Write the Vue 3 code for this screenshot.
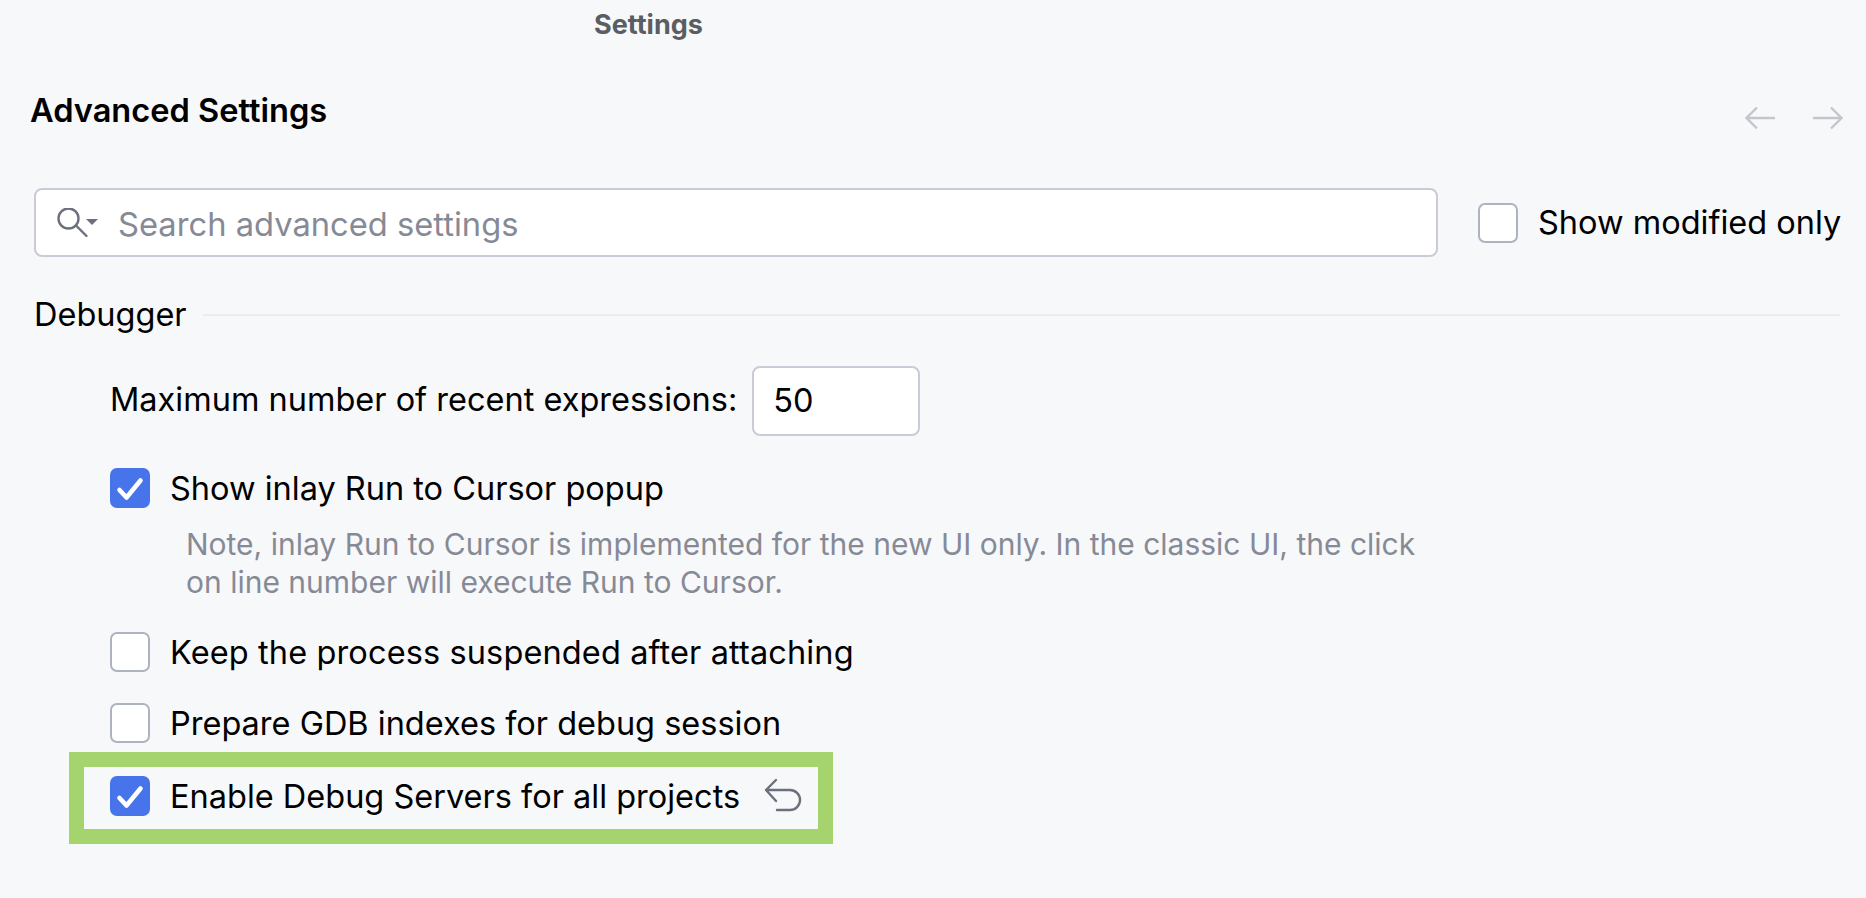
<template>
  <div class="settings-page">
    <div class="window-title">Settings</div>

    <!-- Header -->
    <div class="page-header">
      <div class="page-title">Advanced Settings</div>
      <div class="nav-arrows">
        <svg width="30" height="24" viewBox="0 0 30 24" fill="none" stroke="#c4c6cb" stroke-width="2.4">
          <path d="M30 12H2M12 1.5L1.5 12L12 22.5" />
        </svg>
        <svg width="30" height="24" viewBox="0 0 30 24" fill="none" stroke="#c4c6cb" stroke-width="2.4">
          <path d="M0 12H28M18 1.5L28.5 12L18 22.5" />
        </svg>
      </div>
    </div>

    <!-- Search -->
    <div class="search-row">
      <div class="search-box">
        <svg class="search-icon" width="44" height="30" viewBox="0 0 44 30" fill="none">
          <circle cx="12.5" cy="10.5" r="10" stroke="#6c707e" stroke-width="2.4" />
          <path d="M20 17.5L30.5 28" stroke="#6c707e" stroke-width="2.4" stroke-linecap="round" />
          <path d="M30 11H42L36 17Z" fill="#6c707e" />
        </svg>
        <span class="search-placeholder">Search advanced settings</span>
      </div>
      <label class="check-row modified">
        <span class="checkbox"></span>
        <span>Show modified only</span>
      </label>
    </div>

    <!-- Debugger -->
    <div class="group-title">
      <span>Debugger</span>
      <div class="group-line"></div>
    </div>

    <div class="group-body">
      <div class="number-row">
        <span class="number-label">Maximum number of recent expressions:</span>
        <div class="number-input">50</div>
      </div>

      <div class="check-row run-cursor">
        <span class="checkbox checked">
          <svg width="40" height="40" viewBox="0 0 40 40" fill="none">
            <path d="M9.5 22L16.5 29.5L30.5 12.5" stroke="#fff" stroke-width="4.6" stroke-linecap="round" stroke-linejoin="round" />
          </svg>
        </span>
        <span>Show inlay Run to Cursor popup</span>
      </div>
      <div class="note">
        Note, inlay Run to Cursor is implemented for the new UI only. In the classic UI, the click<br />
        on line number will execute Run to Cursor.
      </div>

      <div class="check-row keep">
        <span class="checkbox"></span>
        <span>Keep the process suspended after attaching</span>
      </div>
      <div class="check-row gdb">
        <span class="checkbox"></span>
        <span>Prepare GDB indexes for debug session</span>
      </div>
    </div>

    <!-- Highlighted option -->
    <div class="highlight">
      <div class="check-row">
        <span class="checkbox checked">
          <svg width="40" height="40" viewBox="0 0 40 40" fill="none">
            <path d="M9.5 22L16.5 29.5L30.5 12.5" stroke="#fff" stroke-width="4.6" stroke-linecap="round" stroke-linejoin="round" />
          </svg>
        </span>
        <span>Enable Debug Servers for all projects</span>
        <svg class="undo" width="38" height="36" viewBox="0 0 38 36" fill="none" stroke="#6c707e" stroke-width="2.4" stroke-linecap="round" stroke-linejoin="round">
          <path d="M12 2L2 12L12 23M2 12H26A10 10 0 0 1 26 32H13" />
        </svg>
      </div>
    </div>
  </div>
</template>

<script setup>
</script>

<style scoped>
.settings-page {
  width: 1866px;
  height: 898px;
  box-sizing: border-box;
  background: #f7f8fa;
  padding: 0 26px 0 34px;
  font-family: Inter, "Liberation Sans", sans-serif;
  font-size: 32.5px;
  color: #000;
  overflow: hidden;
}

.window-title {
  height: 50px;
  line-height: 50px;
  margin-left: 560px;
  font-size: 27px;
  font-weight: 700;
  color: #5a5d63;
}

.page-header {
  display: flex;
  align-items: center;
  justify-content: space-between;
  height: 120px;
  margin-left: -4px;
  margin-right: -3px;
}

.page-title {
  font-size: 32.6px;
  font-weight: 600;
}

.nav-arrows {
  display: flex;
  gap: 38px;
  margin-top: 16px;
}

.search-row {
  display: flex;
  align-items: center;
  height: 69px;
  margin-top: 18px;
}

.search-box {
  display: flex;
  align-items: center;
  flex: none;
  width: 1404px;
  height: 69px;
  box-sizing: border-box;
  background: #fff;
  border: 2px solid #c9ccd6;
  border-radius: 8px;
  padding-left: 20px;
}

.search-icon {
  margin-right: 18px;
}

.search-placeholder {
  padding-top: 2px;
  font-size: 32.7px;
  color: #868a96;
}

.check-row {
  display: flex;
  align-items: center;
  gap: 20px;
  height: 40px;
  white-space: nowrap;
}

.modified {
  margin-left: 40px;
}

.checkbox {
  display: block;
  width: 40px;
  height: 40px;
  box-sizing: border-box;
  flex: none;
  background: #fff;
  border: 2px solid #aeb3c2;
  border-radius: 7px;
}

.checkbox.checked {
  background: #4774ea;
  border: none;
}

.checkbox svg {
  display: block;
}

.group-title {
  display: flex;
  align-items: center;
  gap: 16px;
  height: 38px;
  margin-top: 38px;
}

.group-line {
  flex: 1;
  height: 2px;
  margin-top: 2px;
  background: #ebecf0;
}

.group-body {
  padding-left: 76px;
}

.number-row {
  display: flex;
  align-items: center;
  gap: 15px;
  margin-top: 33px;
}

.number-label {
  padding-bottom: 3px;
}

.number-input {
  width: 168px;
  height: 70px;
  line-height: 66px;
  box-sizing: border-box;
  padding-left: 19px;
  background: #fff;
  border: 2px solid #c9ccd6;
  border-radius: 8px;
}

.run-cursor {
  margin-top: 32px;
}

.note {
  margin-top: 17px;
  margin-left: 76px;
  font-size: 30px;
  line-height: 38px;
  color: #868a96;
}

.keep {
  margin-top: 31px;
  letter-spacing: 0.12px;
}

.gdb {
  margin-top: 31px;
}

.highlight {
  width: 764px;
  height: 92px;
  box-sizing: border-box;
  margin-top: 9px;
  margin-left: 35px;
  padding: 9px 0 0 26px;
  border: 15px solid #a5d46f;
}

.undo {
  margin-left: 4px;
}
</style>
